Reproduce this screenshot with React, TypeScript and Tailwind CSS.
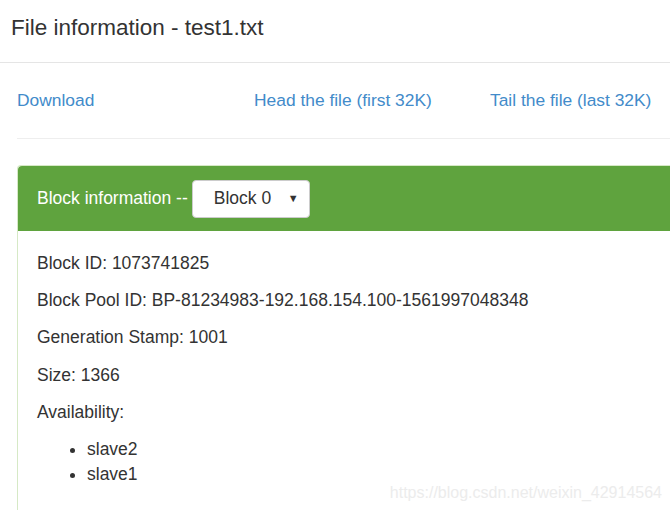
export default function App() {
  return (
    <div className="relative h-[510px] w-[670px] overflow-hidden bg-white font-['Liberation_Sans',Arial,sans-serif] text-[#333]">
      <div className="flex h-[63px] items-center border-b border-[#e5e5e5] pl-[11px] pb-[6px]">
        <h1 className="text-[22.5px] font-normal text-[#333]">File information - test1.txt</h1>
      </div>

      <div className="pl-[17px]">
        <div className="flex h-[76px] items-center border-b border-[#eeeeee] text-[17.4px] text-[#428bca]">
          <a href="#" className="w-[237px]">Download</a>
          <a href="#" className="w-[236px]">Head the file (first 32K)</a>
          <a href="#">Tail the file (last 32K)</a>
        </div>

        <div className="mt-[26px] h-[400px] rounded-tl-[4px] border-l border-t border-[#d6e9c6]">
          <div className="flex h-[65px] items-center rounded-tl-[4px] bg-[#5fa33e] pl-[19px] text-[17.5px] text-white">
            <span>Block information --</span>
            <div className="ml-[4px] flex h-[38px] w-[118px] items-center justify-between rounded-[4px] border border-[#ccc] bg-white pl-[21px] pr-[10px] text-[17.5px] text-[#333]">
              <span>Block 0</span>
              <span className="text-[11px]">▼</span>
            </div>
          </div>
          <div className="flex flex-col pl-[19px] pt-[22px] text-[17.5px] leading-[21px] text-[#333]">
            <p>Block ID: 1073741825</p>
            <p className="mt-[16px]">Block Pool ID: BP-81234983-192.168.154.100-1561997048348</p>
            <p className="mt-[16px]">Generation Stamp: 1001</p>
            <p className="mt-[17px]">Size: 1366</p>
            <p className="mt-[16px]">Availability:</p>
            <ul className="mt-[14px] list-disc pl-[50px] leading-[25px]">
              <li>slave2</li>
              <li>slave1</li>
            </ul>
          </div>
        </div>
      </div>

      <div className="absolute right-[8px] top-[481px] text-[16px] text-[#ececec]">
        https://blog.csdn.net/weixin_42914564
      </div>
    </div>
  )
}
